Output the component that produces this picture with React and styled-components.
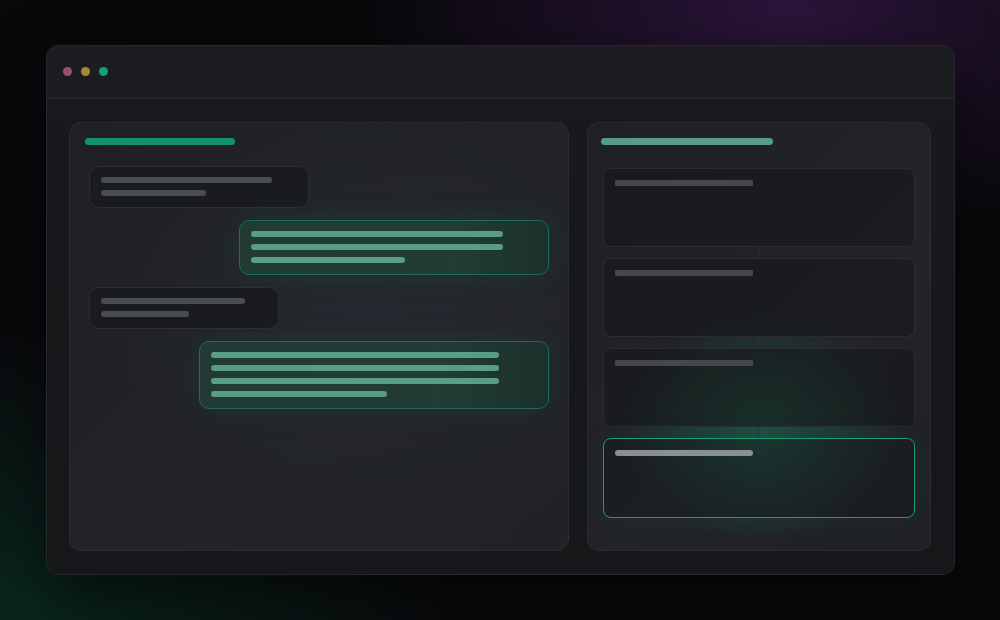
import React from "react";
import styled, { createGlobalStyle } from "styled-components";

const Global = createGlobalStyle`
  html, body { margin: 0; padding: 0; }
  body {
    width: 1000px;
    height: 620px;
    overflow: hidden;
    background-color: #09090c;
    background-image:
      radial-gradient(ellipse 420px 230px at 790px 10px, rgba(72, 30, 96, 0.55), rgba(72, 30, 96, 0) 100%),
      radial-gradient(ellipse 440px 280px at 20px 610px, rgba(10, 72, 52, 0.45), rgba(10, 72, 52, 0) 100%);
    font-family: "Inter", "Liberation Sans", sans-serif;
  }
`;

const Page = styled.div`
  width: 1000px;
  height: 620px;
  box-sizing: border-box;
  padding: 45px 45px 45px 46px;
  display: flex;
`;

const Window = styled.div`
  width: 909px;
  height: 530px;
  box-sizing: border-box;
  border: 1px solid #26272c;
  border-radius: 12px;
  background: #17181b;
  box-shadow: 0 20px 60px rgba(0, 0, 0, 0.5);
  display: flex;
  flex-direction: column;
  overflow: hidden;
`;

const TitleBar = styled.div`
  height: 53px;
  flex: none;
  box-sizing: border-box;
  border-bottom: 1px solid #2b2c31;
  background: linear-gradient(180deg, #1c1d21, #1b1c20);
  display: flex;
  align-items: center;
  gap: 9px;
  padding: 0 0 1px 16px;
`;

const Dot = styled.span`
  width: 9px;
  height: 9px;
  border-radius: 50%;
  background: ${(p) => p.$color};
`;

const Body = styled.div`
  flex: 1;
  display: flex;
  gap: 18px;
  padding: 23px 23px 23px 22px;
  background: linear-gradient(180deg, #18191c, #161719);
`;

const Panel = styled.div`
  box-sizing: border-box;
  width: ${(p) => p.$w}px;
  border: 1px solid #2b2d32;
  border-radius: 12px;
  display: flex;
  flex-direction: column;
`;

const LeftPanel = styled(Panel)`
  padding: 15px 19px 15px 15px;
  background:
    radial-gradient(ellipse 260px 200px at 300px 180px, rgba(40, 44, 52, 0.6), rgba(40, 44, 52, 0)),
    linear-gradient(135deg, #1f2024, #222428 60%, #212226);
`;

const RightPanel = styled(Panel)`
  padding: 15px 15px 15px 13px;
  background:
    radial-gradient(ellipse 140px 115px at 173px 305px, rgba(22, 150, 104, 0.38), rgba(22, 150, 104, 0) 100%),
    linear-gradient(135deg, #1f2024, #222428 60%, #202125);
`;

const HeadBar = styled.div`
  width: ${(p) => p.$w}px;
  height: 7px;
  border-radius: 4px;
  background: ${(p) => p.$color};
  flex: none;
`;

const Thread = styled.div`
  display: flex;
  flex-direction: column;
  gap: 12px;
  margin: 21px 0 0 4px;
`;

const Bubble = styled.div`
  box-sizing: border-box;
  width: ${(p) => p.$w}px;
  align-self: ${(p) => (p.$mine ? "flex-end" : "flex-start")};
  padding: 10px 11px 11px;
  border-radius: 10px;
  display: flex;
  flex-direction: column;
  gap: 7px;
  border: 1px solid ${(p) => (p.$mine ? "#1f6c54" : "#2d2f34")};
  background: ${(p) =>
    p.$mine
      ? "linear-gradient(90deg, #213a34, #213c35 70%, #1c302b)"
      : "#1a1b1e"};
  box-shadow: ${(p) => (p.$mine ? "0 0 30px rgba(30, 140, 100, 0.14)" : "none")};
`;

const Line = styled.div`
  width: ${(p) => p.$w}px;
  height: 6px;
  border-radius: 3px;
  background: ${(p) => (p.$mine ? "#5a9c86" : "#4a4c53")};
`;

const Steps = styled.div`
  display: flex;
  flex-direction: column;
  margin: 23px 0 0 2px;
`;

const Card = styled.div`
  box-sizing: border-box;
  width: 312px;
  height: ${(p) => (p.$active ? 80 : 79)}px;
  padding: 11px 11px;
  border-radius: 8px;
  border: 1px solid ${(p) => (p.$active ? "#1b9c71" : "#2b2d32")};
  background: ${(p) =>
    p.$active ? "rgba(20, 24, 26, 0.45)" : "rgba(20, 21, 24, 0.55)"};
  box-shadow: ${(p) => (p.$active ? "0 0 24px rgba(20, 150, 105, 0.1)" : "none")};
`;

const CardLine = styled.div`
  width: 138px;
  height: 6px;
  border-radius: ${(p) => (p.$active ? 3 : 1)}px;
  background: ${(p) => (p.$active ? "#8a8f8f" : "#45474d")};
`;

const Connector = styled.div`
  width: 1px;
  height: 11px;
  margin-left: 155px;
  background: #2f3136;
`;

const leftMessages = [
  { mine: false, w: 220, lines: [171, 105] },
  { mine: true, w: 310, lines: [252, 252, 154] },
  { mine: false, w: 190, lines: [144, 88] },
  { mine: true, w: 350, lines: [288, 288, 288, 176] },
];

export default function App() {
  return (
    <>
      <Global />
      <Page>
        <Window>
          <TitleBar>
            <Dot $color="#9b4e6e" />
            <Dot $color="#a4893b" />
            <Dot $color="#12a079" />
          </TitleBar>
          <Body>
            <LeftPanel $w={500}>
              <HeadBar $w={150} $color="#14936b" />
              <Thread>
                {leftMessages.map((m, i) => (
                  <Bubble key={i} $mine={m.mine} $w={m.w}>
                    {m.lines.map((lw, j) => (
                      <Line key={j} $w={lw} $mine={m.mine} />
                    ))}
                  </Bubble>
                ))}
              </Thread>
            </LeftPanel>
            <RightPanel $w={344}>
              <HeadBar $w={172} $color="#5a9b85" />
              <Steps>
                {[0, 1, 2, 3].map((i) => (
                  <React.Fragment key={i}>
                    {i > 0 && <Connector />}
                    <Card $active={i === 3}>
                      <CardLine $active={i === 3} />
                    </Card>
                  </React.Fragment>
                ))}
              </Steps>
            </RightPanel>
          </Body>
        </Window>
      </Page>
    </>
  );
}
